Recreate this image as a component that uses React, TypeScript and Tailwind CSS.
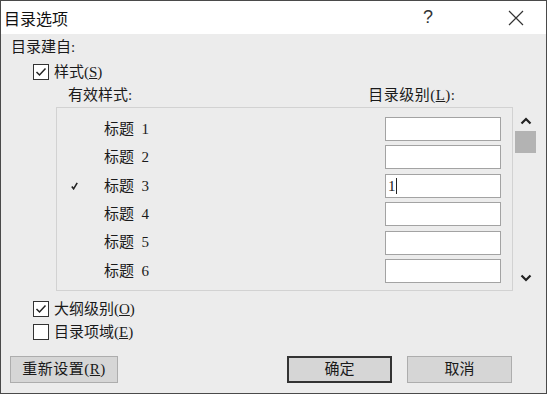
import React from 'react';

const cjk = "font-['Liberation_Serif','Noto_Sans_CJK_SC',serif]";

function CheckBox({ checked }: { checked: boolean }) {
  return (
    <div className="w-[16px] h-[16px] border border-[#333] bg-white flex items-center justify-center">
      {checked && (
        <svg width="12" height="12" viewBox="0 0 12 12">
          <polyline points="1.5,6 4.5,9 10.5,2.5" fill="none" stroke="#222" strokeWidth="1.5" />
        </svg>
      )}
    </div>
  );
}

function Chevron({ up }: { up?: boolean }) {
  return (
    <svg width="12" height="8" viewBox="0 0 12 8">
      <polyline
        points={up ? '1.5,6.5 6,2 10.5,6.5' : '1.5,1.5 6,6 10.5,1.5'}
        fill="none"
        stroke="#222"
        strokeWidth="2.2"
      />
    </svg>
  );
}

const rows = [1, 2, 3, 4, 5, 6];

export default function App() {
  return (
    <div className={`w-[547px] h-[394px] border border-[#4a4a4a] flex flex-col text-[#1a1a1a] ${cjk}`}>
      {/* Title bar */}
      <div className="h-[33px] bg-white flex items-center shrink-0">
        <span className="pl-[3px] text-[16px] font-['Noto_Sans_CJK_SC',sans-serif] text-[#111]">目录选项</span>
        <span className="ml-auto mr-[75px] text-[18px] font-['Liberation_Sans',sans-serif] text-[#333]">?</span>
        <svg width="16" height="16" viewBox="0 0 16 16" className="mr-[22px]">
          <path d="M1 1 L15 15 M15 1 L1 15" stroke="#333" strokeWidth="1.2" />
        </svg>
      </div>

      {/* Body */}
      <div className="flex-1 bg-[#ececec] pl-[10px] pt-[3px] flex flex-col">
        <div className="h-[20px] flex items-center text-[15px]">目录建自:</div>

        <div className="ml-[22px] mt-[6px] h-[18px] flex items-center gap-[5px] text-[15px]">
          <CheckBox checked />
          <span>
            样式(<span className="underline">S</span>)
          </span>
        </div>

        <div className="mt-[4px] h-[20px] flex items-center text-[15px]">
          <span className="ml-[57px]">有效样式:</span>
          <span className="ml-[236px] tracking-[0.5px]">
            目录级别(<span className="underline">L</span>):
          </span>
        </div>

        {/* List + scrollbar */}
        <div className="ml-[45px] mt-[2px] flex">
          <div className="w-[457px] h-[184px] border border-[#d2d2d2] pt-[9px] flex flex-col gap-[4.4px]">
            {rows.map((n) => (
              <div key={n} className="h-[24px] flex items-center text-[15px]">
                <div className="w-[47px] flex justify-end pr-[26px]">
                  {n === 3 && (
                    <svg width="7" height="8" viewBox="0 0 7 8">
                      <polyline points="0.8,4.5 2.6,6.8 6.2,0.8" fill="none" stroke="#222" strokeWidth="1.6" />
                    </svg>
                  )}
                </div>
                <span className="whitespace-pre">标题  {n}</span>
                <div className="ml-auto mr-[11px] w-[116px] h-[24px] border border-[#a3a3a3] bg-white flex items-center pl-[2px]">
                  {n === 3 && (
                    <>
                      <span className="text-[15px]">1</span>
                      <span className="w-[1px] h-[16px] bg-[#222]" />
                    </>
                  )}
                </div>
              </div>
            ))}
          </div>
          <div className="w-[25px] h-[184px] flex flex-col items-center">
            <div className="mt-[9px] h-[10px] flex items-center">
              <Chevron up />
            </div>
            <div className="mt-[5px] w-[21px] h-[22px] bg-[#b3b3b3]" />
            <div className="mt-auto mb-[8px] h-[10px] flex items-center">
              <Chevron />
            </div>
          </div>
        </div>

        <div className="ml-[22px] mt-[9px] h-[18px] flex items-center gap-[5px] text-[15px]">
          <CheckBox checked />
          <span>
            大纲级别(<span className="underline">O</span>)
          </span>
        </div>
        <div className="ml-[22px] mt-[5px] h-[18px] flex items-center gap-[5px] text-[15px]">
          <CheckBox checked={false} />
          <span>
            目录项域(<span className="underline">E</span>)
          </span>
        </div>

        {/* Buttons */}
        <div className="mt-[15px] flex items-center text-[15px]">
          <button className="ml-[-1px] w-[108px] h-[27px] bg-[#d6d6d6] border border-[#adadad] flex items-center justify-center tracking-[0.5px]">
            重新设置(<span className="underline">R</span>)
          </button>
          <button className="ml-[169px] w-[105px] h-[27px] bg-[#d6d6d6] border-2 border-[#333] flex items-center justify-center">
            确定
          </button>
          <button className="ml-[15px] w-[105px] h-[27px] bg-[#d6d6d6] border border-[#adadad] flex items-center justify-center">
            取消
          </button>
        </div>
      </div>
    </div>
  );
}
